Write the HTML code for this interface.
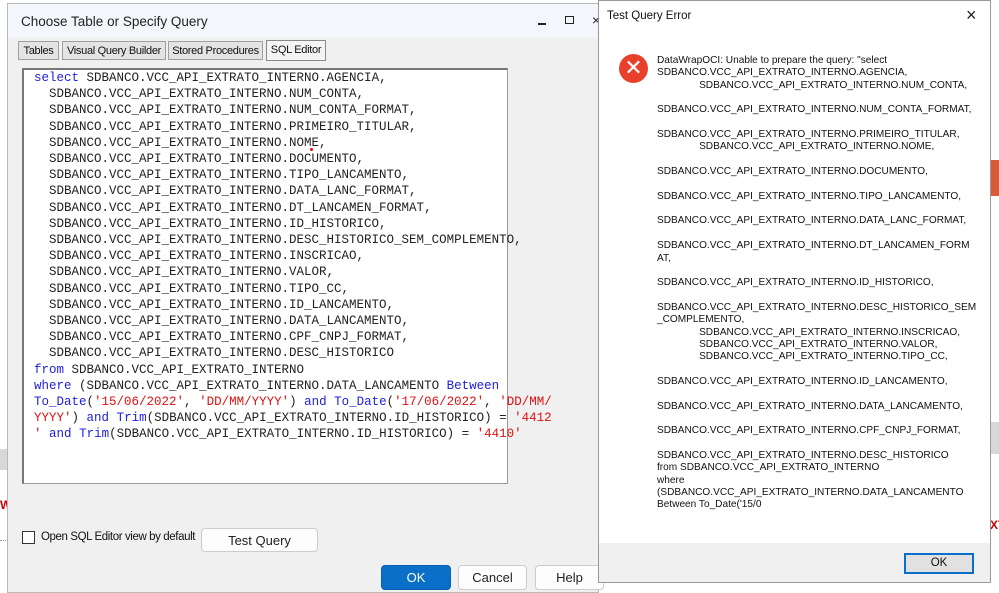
<!DOCTYPE html>
<html><head><meta charset="utf-8"><style>
*{margin:0;padding:0;box-sizing:border-box}
body{width:999px;height:587px;overflow:hidden;background:#fff;position:relative;font-family:"Liberation Sans",sans-serif}
.abs{position:absolute}
.tab{top:41px;height:19px;font-size:11px;border:1px solid #a0a0a0;background:#e4e4e4;padding:3px 0 0 0;text-align:center;color:#111;letter-spacing:-0.3px;white-space:nowrap;overflow:hidden}
#code{font-family:"Liberation Mono",monospace;font-size:12.5px;line-height:16.2px;white-space:pre;color:#222}
.k{color:#2020e0}.s{color:#e01010}
.btn{background:#fdfdfd;border:1px solid #ccc;border-radius:4px;font-size:13px;text-align:center;color:#222}
#etxt{font-size:10.1px;line-height:12.35px;white-space:pre;color:#111}
</style></head><body>
<div class="abs" style="left:0;top:449px;width:10px;height:21px;background:#d8d8d8"></div>
<div class="abs" style="left:0;top:540px;width:10px;border-top:1px dotted #999"></div>
<div class="abs" style="left:0;top:498px;font-size:12px;color:#c00;font-weight:bold">W</div>
<div class="abs" style="left:990px;top:160px;width:9px;height:36px;background:#d85a3a"></div>
<div class="abs" style="left:990px;top:422px;width:9px;height:32px;background:#d8d8d8"></div>
<div class="abs" style="left:990px;top:518px;font-size:12px;color:#c00;font-weight:bold">XT</div>

<div class="abs" style="left:7px;top:3px;width:592px;height:590px;background:#f0f0f0;border:1px solid #b8b8b8"></div>
<div class="abs" style="left:8px;top:4px;width:590px;height:34px;background:#f3f6fb;font-size:13.5px;color:#222;padding:10px 0 0 13px">Choose Table or Specify Query</div>
<div class="abs" style="left:538px;top:23px;width:8px;height:2px;background:#222"></div>
<div class="abs" style="left:565px;top:16px;width:9px;height:8px;border:1.5px solid #222"></div>
<div class="abs" style="left:592px;top:12px;font-size:14px;color:#222">×</div>

<div class="tab abs" style="left:18px;width:41px">Tables</div>
<div class="tab abs" style="left:62px;width:104px">Visual Query Builder</div>
<div class="tab abs" style="left:168px;width:95px">Stored Procedures</div>
<div class="tab abs" style="left:266px;width:60px;background:#f4f4f4;border-color:#888;top:40px;height:21px">SQL Editor</div>

<div class="abs" style="left:22px;top:68px;width:486px;height:416px;background:#fff;border:1px solid #9a9a9a;border-left:2px solid #777;border-top:2px solid #777"></div>
<div id="code" class="abs" style="left:34px;top:70px"><span class="k">select</span> SDBANCO.VCC_API_EXTRATO_INTERNO.AGENCIA,
  SDBANCO.VCC_API_EXTRATO_INTERNO.NUM_CONTA,
  SDBANCO.VCC_API_EXTRATO_INTERNO.NUM_CONTA_FORMAT,
  SDBANCO.VCC_API_EXTRATO_INTERNO.PRIMEIRO_TITULAR,
  SDBANCO.VCC_API_EXTRATO_INTERNO.NOME,
  SDBANCO.VCC_API_EXTRATO_INTERNO.DOCUMENTO,
  SDBANCO.VCC_API_EXTRATO_INTERNO.TIPO_LANCAMENTO,
  SDBANCO.VCC_API_EXTRATO_INTERNO.DATA_LANC_FORMAT,
  SDBANCO.VCC_API_EXTRATO_INTERNO.DT_LANCAMEN_FORMAT,
  SDBANCO.VCC_API_EXTRATO_INTERNO.ID_HISTORICO,
  SDBANCO.VCC_API_EXTRATO_INTERNO.DESC_HISTORICO_SEM_COMPLEMENTO,
  SDBANCO.VCC_API_EXTRATO_INTERNO.INSCRICAO,
  SDBANCO.VCC_API_EXTRATO_INTERNO.VALOR,
  SDBANCO.VCC_API_EXTRATO_INTERNO.TIPO_CC,
  SDBANCO.VCC_API_EXTRATO_INTERNO.ID_LANCAMENTO,
  SDBANCO.VCC_API_EXTRATO_INTERNO.DATA_LANCAMENTO,
  SDBANCO.VCC_API_EXTRATO_INTERNO.CPF_CNPJ_FORMAT,
  SDBANCO.VCC_API_EXTRATO_INTERNO.DESC_HISTORICO
<span class="k">from</span> SDBANCO.VCC_API_EXTRATO_INTERNO
<span class="k">where</span> (SDBANCO.VCC_API_EXTRATO_INTERNO.DATA_LANCAMENTO <span class="k">Between</span>
<span class="k">To_Date</span>(<span class="s">'15/06/2022'</span>, <span class="s">'DD/MM/YYYY'</span>) <span class="k">and</span> <span class="k">To_Date</span>(<span class="s">'17/06/2022'</span>, <span class="s">'DD/MM/</span>
<span class="s">YYYY'</span>) <span class="k">and</span> <span class="k">Trim</span>(SDBANCO.VCC_API_EXTRATO_INTERNO.ID_HISTORICO) = <span class="s">'4412</span>
<span class="s">'</span> <span class="k">and</span> <span class="k">Trim</span>(SDBANCO.VCC_API_EXTRATO_INTERNO.ID_HISTORICO) = <span class="s">'4410'</span></div>
<div class="abs" style="left:310px;top:148px;width:3px;height:3px;background:#e00;border-radius:50%"></div>

<div class="abs" style="left:22px;top:531px;width:13px;height:13px;border:1px solid #333;background:#fff"></div>
<div class="abs" style="left:41px;top:531px;font-size:11.5px;color:#111;letter-spacing:-0.4px;white-space:nowrap">Open SQL Editor view by default</div>
<div class="btn abs" style="left:201px;top:528px;width:117px;height:24px;padding-top:4px">Test Query</div>
<div class="btn abs" style="left:381px;top:565px;width:70px;height:25px;padding-top:4px;background:#0a6fc8;border-color:#0a5fb0;color:#fff">OK</div>
<div class="btn abs" style="left:458px;top:565px;width:69px;height:25px;padding-top:4px">Cancel</div>
<div class="btn abs" style="left:535px;top:565px;width:69px;height:25px;padding-top:4px">Help</div>

<div class="abs" style="left:598px;top:0;width:393px;height:583px;background:#fff;border:1px solid #999"></div>
<div class="abs" style="left:599px;top:543px;width:391px;height:39px;background:#f0f0f0"></div>
<div class="abs" style="left:607px;top:10px;font-size:11.5px;color:#111">Test Query Error</div>
<div class="abs" style="left:966px;top:5px;font-size:18px;color:#222;font-weight:300">×</div>
<div class="abs" style="left:619px;top:54px;width:29px;height:29px;border-radius:50%;background:#e8402a;color:#fff;font-size:22px;text-align:center;line-height:28px">✕</div>
<div id="etxt" class="abs" style="left:657px;top:55px">DataWrapOCI: Unable to prepare the query: "select
SDBANCO.VCC_API_EXTRATO_INTERNO.AGENCIA,
               SDBANCO.VCC_API_EXTRATO_INTERNO.NUM_CONTA,

SDBANCO.VCC_API_EXTRATO_INTERNO.NUM_CONTA_FORMAT,

SDBANCO.VCC_API_EXTRATO_INTERNO.PRIMEIRO_TITULAR,
               SDBANCO.VCC_API_EXTRATO_INTERNO.NOME,

SDBANCO.VCC_API_EXTRATO_INTERNO.DOCUMENTO,

SDBANCO.VCC_API_EXTRATO_INTERNO.TIPO_LANCAMENTO,

SDBANCO.VCC_API_EXTRATO_INTERNO.DATA_LANC_FORMAT,

SDBANCO.VCC_API_EXTRATO_INTERNO.DT_LANCAMEN_FORM
AT,

SDBANCO.VCC_API_EXTRATO_INTERNO.ID_HISTORICO,

SDBANCO.VCC_API_EXTRATO_INTERNO.DESC_HISTORICO_SEM
_COMPLEMENTO,
               SDBANCO.VCC_API_EXTRATO_INTERNO.INSCRICAO,
               SDBANCO.VCC_API_EXTRATO_INTERNO.VALOR,
               SDBANCO.VCC_API_EXTRATO_INTERNO.TIPO_CC,

SDBANCO.VCC_API_EXTRATO_INTERNO.ID_LANCAMENTO,

SDBANCO.VCC_API_EXTRATO_INTERNO.DATA_LANCAMENTO,

SDBANCO.VCC_API_EXTRATO_INTERNO.CPF_CNPJ_FORMAT,

SDBANCO.VCC_API_EXTRATO_INTERNO.DESC_HISTORICO
from SDBANCO.VCC_API_EXTRATO_INTERNO
where
(SDBANCO.VCC_API_EXTRATO_INTERNO.DATA_LANCAMENTO
Between To_Date('15/0</div>
<div class="abs" style="left:904px;top:553px;width:70px;height:21px;background:#e1e1e1;border:2px solid #0a6fc8;font-size:11.5px;text-align:center;padding-top:2px;color:#111">OK</div>
</body></html>
